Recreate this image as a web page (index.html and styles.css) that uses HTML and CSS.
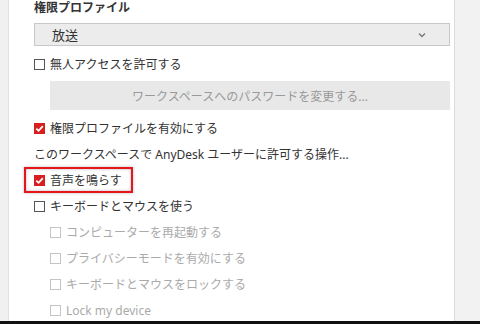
FILE: index.html
```html
<!DOCTYPE html>
<html lang="ja">
<head>
    <meta charset="UTF-8">
    <title>権限プロファイル</title>
    <link rel="stylesheet" href="styles.css">
</head>
<body>
    <div class="frame">
        <div class="side-left"></div>
        <div class="panel">
            <div class="title">権限プロファイル</div>
            <div class="select">
                <span>放送</span>
                <svg class="chevron" width="8" height="6" viewBox="0 0 8 6"><path d="M1 1.5 L4 4.5 L7 1.5" fill="none" stroke="#777" stroke-width="1.4"/></svg>
            </div>

            <div class="row"><span class="box"></span>無人アクセスを許可する</div>
            <div class="button">ワークスペースへのパスワードを変更する...</div>

            <div class="row"><span class="box checked"><svg width="11" height="11" viewBox="0 0 11 11"><path d="M2.3 5.6 L4.6 7.8 L8.8 3.2" fill="none" stroke="#fff" stroke-width="1.8"/></svg></span>権限プロファイルを有効にする</div>
            <div class="row">このワークスペースで AnyDesk ユーザーに許可する操作...</div>

            <div class="row highlight"><span class="box checked"><svg width="11" height="11" viewBox="0 0 11 11"><path d="M2.3 5.6 L4.6 7.8 L8.8 3.2" fill="none" stroke="#fff" stroke-width="1.8"/></svg></span>音声を鳴らす</div>
            <div class="row"><span class="box"></span>キーボードとマウスを使う</div>

            <div class="row sub disabled"><span class="box"></span>コンピューターを再起動する</div>
            <div class="row sub disabled"><span class="box"></span>プライバシーモードを有効にする</div>
            <div class="row sub disabled"><span class="box"></span>キーボードとマウスをロックする</div>
            <div class="row sub disabled"><span class="box"></span>Lock my device</div>
        </div>
        <div class="side-right"></div>
    </div>
    <div class="footer"></div>
</body>
</html>
```

FILE: styles.css
```css
html, body {
    margin: 0;
    height: 324px;
    overflow: hidden;
}
body {
    display: flex;
    flex-direction: column;
    font-family: "Noto Sans", "Noto Sans CJK JP", sans-serif;
    font-size: 12px;
    color: #333;
    background: #fff;
}
.frame {
    flex: 1;
    display: flex;
    min-height: 0;
}
.side-left {
    width: 8px;
    background: #f0f0f0;
    border-right: 1px solid #e0e0e0;
}
.side-right {
    width: 25px;
    background: #f2f2f2;
    border-left: 1px solid #dcdcdc;
}
.panel {
    flex: 1;
    padding: 0 4px 0 25px;
    overflow: hidden;
}
.title {
    font-weight: bold;
    line-height: 16px;
    height: 16px;
}
.select {
    margin-top: 7px;
    height: 21px;
    border: 1px solid #c8c8c8;
    background: #ececec;
    display: flex;
    align-items: center;
    justify-content: space-between;
    padding: 0 23px 0 17px;
}
.select span {
    font-size: 13px;
}
.row {
    height: 26px;
    display: flex;
    align-items: center;
    white-space: nowrap;
}
.select + .row {
    margin-top: 5px;
}
.button {
    margin: 4px 0 0 16px;
    height: 29px;
    background: #e8e8e8;
    color: #999;
    display: flex;
    align-items: center;
    justify-content: center;
}
.button + .row {
    margin-top: 5px;
}
.box {
    width: 9px;
    height: 9px;
    border: 1px solid #555;
    background: #fff;
    margin-right: 5px;
    flex: none;
    display: flex;
}
.box.checked {
    width: 11px;
    height: 11px;
    border: none;
    background: #d71f1f;
}
.sub {
    padding-left: 16px;
}
.disabled {
    color: #aaa;
}
.disabled .box {
    border-color: #c4c4c4;
}
.highlight {
    width: fit-content;
    height: 22px;
    margin-left: -10px;
    padding: 0 9px 0 8px;
    border: 2px solid #e8141c;
    box-shadow: inset 0 0 3px rgba(0, 0, 0, 0.3), 0 0 3px rgba(0, 0, 0, 0.25);
}
.footer {
    height: 3px;
    background: #111;
}
```
